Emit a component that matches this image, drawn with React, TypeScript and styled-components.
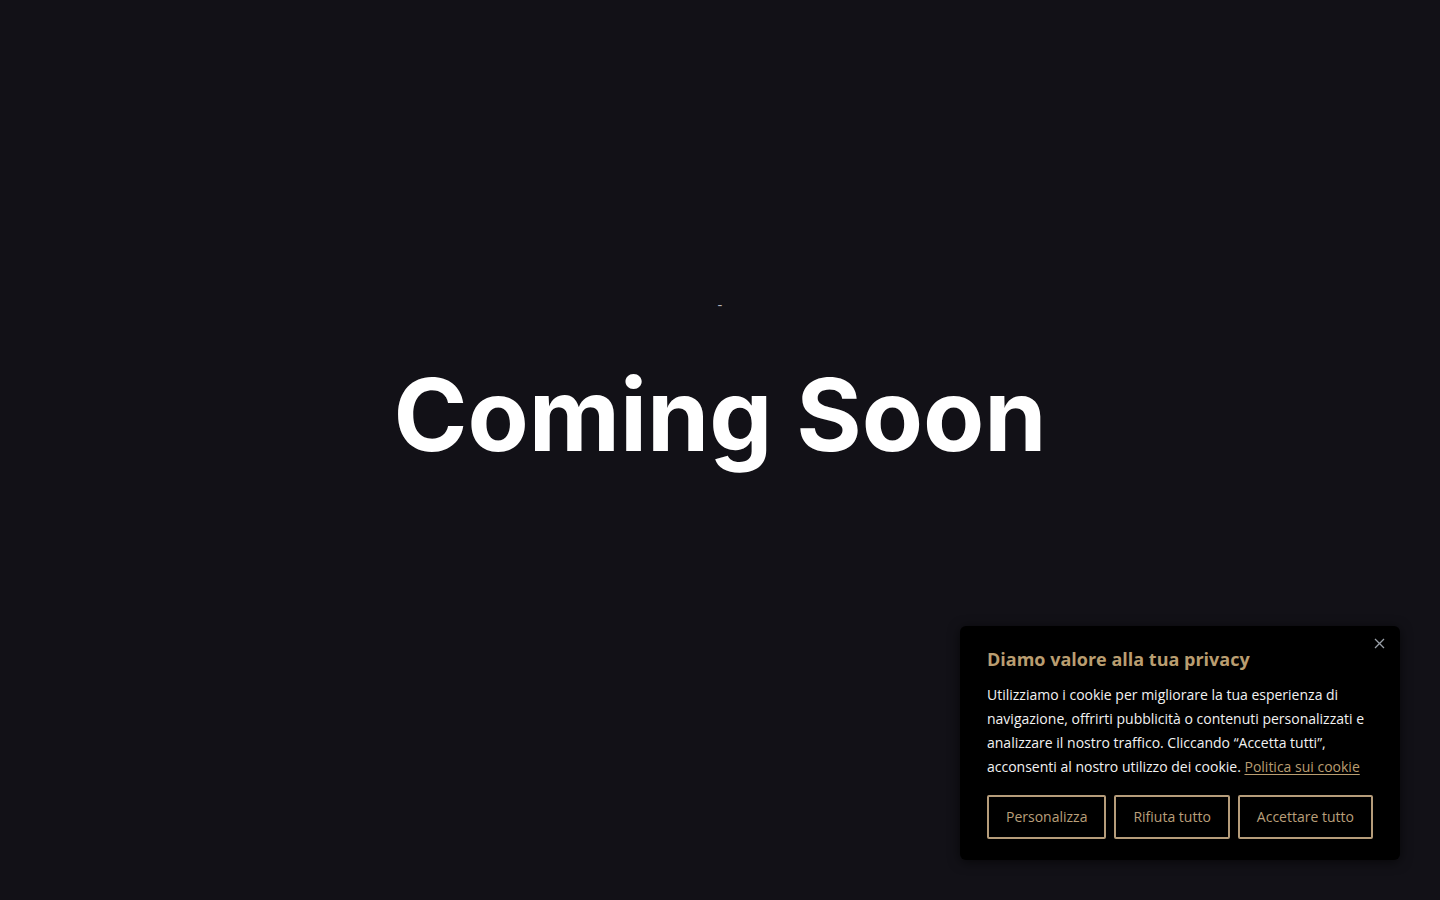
import React from 'react';
import styled, { createGlobalStyle } from 'styled-components';

const GlobalStyle = createGlobalStyle`
  html, body {
    margin: 0;
    padding: 0;
    background: #121117;
  }
  body {
    font-family: "Open Sans", "Liberation Sans", sans-serif;
  }
`;

const Page = styled.main`
  width: 100%;
  height: 900px;
  background: #121117;
  display: flex;
  flex-direction: column;
  align-items: center;
  padding-top: 294px;
  box-sizing: border-box;
  position: relative;
  overflow: hidden;
`;

const Dash = styled.div`
  color: #b4b4bc;
  font-family: "Open Sans", sans-serif;
  font-size: 15px;
  line-height: 20px;
`;

const Heading = styled.h1`
  margin: 41px 0 0;
  color: #ffffff;
  font-family: Inter, "Noto Sans", sans-serif;
  font-weight: 700;
  font-size: 100px;
  line-height: 120px;
  letter-spacing: 0;
`;

const Banner = styled.section`
  position: absolute;
  right: 40px;
  bottom: 40px;
  width: 440px;
  box-sizing: border-box;
  background: #000;
  border-radius: 6px;
  box-shadow: 0 2px 12px rgba(0, 0, 0, 0.6);
  padding: 20px 27px 21px;
`;

const Close = styled.button`
  position: absolute;
  top: 8px;
  right: 12px;
  width: 18px;
  height: 18px;
  padding: 0;
  border: 0;
  background: none;
  display: flex;
  align-items: center;
  justify-content: center;
  cursor: pointer;
`;

const Title = styled.h2`
  margin: 0 0 11px;
  color: #b99d70;
  font-family: "Open Sans", sans-serif;
  font-weight: 700;
  font-size: 18px;
  line-height: 26px;
`;

const Body = styled.p`
  margin: 0;
  color: #f2f2f2;
  font-family: "Open Sans", sans-serif;
  font-size: 14px;
  line-height: 24px;
`;

const Link = styled.a`
  color: #b99d70;
  text-decoration: underline;
  text-underline-offset: 2px;
`;

const Actions = styled.div`
  display: flex;
  gap: 8px;
  margin-top: 16px;
`;

const Button = styled.button`
  height: 44px;
  padding: 0 17px 1px;
  background: transparent;
  border: 2px solid #b59c7a;
  border-radius: 2px;
  color: #b99f7a;
  font-family: "Open Sans", sans-serif;
  font-size: 14px;
  cursor: pointer;
  white-space: nowrap;
`;

export default function App() {
  return (
    <>
      <GlobalStyle />
      <Page>
        <Dash>-</Dash>
        <Heading>Coming Soon</Heading>
        <Banner>
          <Close aria-label="Chiudi">
            <svg width="11" height="11" viewBox="0 0 11 11">
              <path d="M1 1L10 10M10 1L1 10" stroke="#9aa0a8" strokeWidth="1.3" />
            </svg>
          </Close>
          <Title>Diamo valore alla tua privacy</Title>
          <Body>
            Utilizziamo i cookie per migliorare la tua esperienza di navigazione, offrirti
            pubblicità o contenuti personalizzati e analizzare il nostro traffico. Cliccando
            “Accetta tutti”, acconsenti al nostro utilizzo dei cookie.{' '}
            <Link href="#">Politica sui cookie</Link>
          </Body>
          <Actions>
            <Button>Personalizza</Button>
            <Button>Rifiuta tutto</Button>
            <Button>Accettare tutto</Button>
          </Actions>
        </Banner>
      </Page>
    </>
  );
}
